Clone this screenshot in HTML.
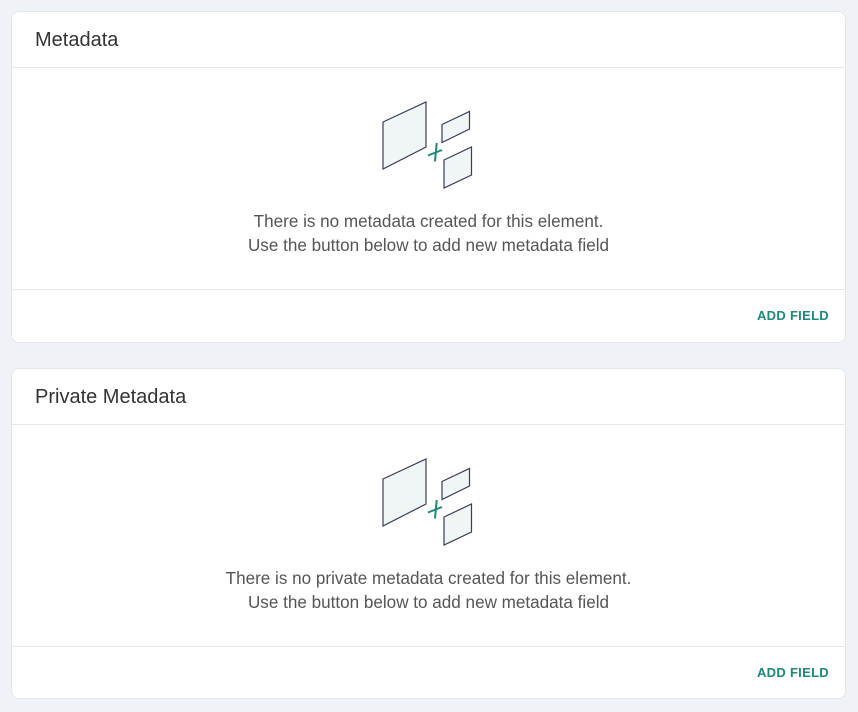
<!DOCTYPE html>
<html><head><style>
body{margin:0;background:#eff3f7;font-family:"Liberation Sans",sans-serif;width:858px;height:712px;overflow:hidden;position:relative}
.card{position:absolute;left:11px;width:835px;background:#fff;border:1px solid #e3e7ec;border-radius:8px;box-sizing:border-box}
.h{height:56px;border-bottom:1px solid #e6e9ed;box-sizing:border-box;padding-left:23px;font-size:20px;color:#333;line-height:57px}
.b{height:222px;border-bottom:1px solid #e6e9ed;box-sizing:border-box;position:relative;text-align:center}
.b svg{position:absolute;left:348px;top:0}
.t{position:absolute;left:0;right:0;top:142px;font-size:17.1px;color:#555;line-height:24px}
.f{height:52px;text-align:right;padding-right:16px;font-size:13px;font-weight:bold;color:#1b8a78;line-height:52px;letter-spacing:.3px}
</style></head><body>
<div class="card" style="top:11px;height:332px">
<div class="h">Metadata</div>
<div class="b">
<svg width="120" height="130" viewBox="360 67 120 130" fill="#f0f5f5" stroke="#3a3c5a" stroke-width="1.2">
<path d="M383 121L426 101L426 146L383 168Z"/>
<path d="M442 123.5L469.5 110.5L469.5 128L442 141.5Z"/>
<path d="M444 159L471.5 146L471.5 174L444 187Z"/>
<path d="M436.7 142L435 160.5M428 154.5L442 149" stroke="#1b8a78" stroke-width="2"/>
</svg>
<div class="t">There is no metadata created for this element.<br>Use the button below to add new metadata field</div>
</div>
<div class="f">ADD FIELD</div>
</div>
<div class="card" style="top:368px;height:331px">
<div class="h">Private Metadata</div>
<div class="b">
<svg width="120" height="130" viewBox="360 67 120 130" fill="#f0f5f5" stroke="#3a3c5a" stroke-width="1.2">
<path d="M383 121L426 101L426 146L383 168Z"/>
<path d="M442 123.5L469.5 110.5L469.5 128L442 141.5Z"/>
<path d="M444 159L471.5 146L471.5 174L444 187Z"/>
<path d="M436.7 142L435 160.5M428 154.5L442 149" stroke="#1b8a78" stroke-width="2"/>
</svg>
<div class="t">There is no private metadata created for this element.<br>Use the button below to add new metadata field</div>
</div>
<div class="f">ADD FIELD</div>
</div>
</body></html>
